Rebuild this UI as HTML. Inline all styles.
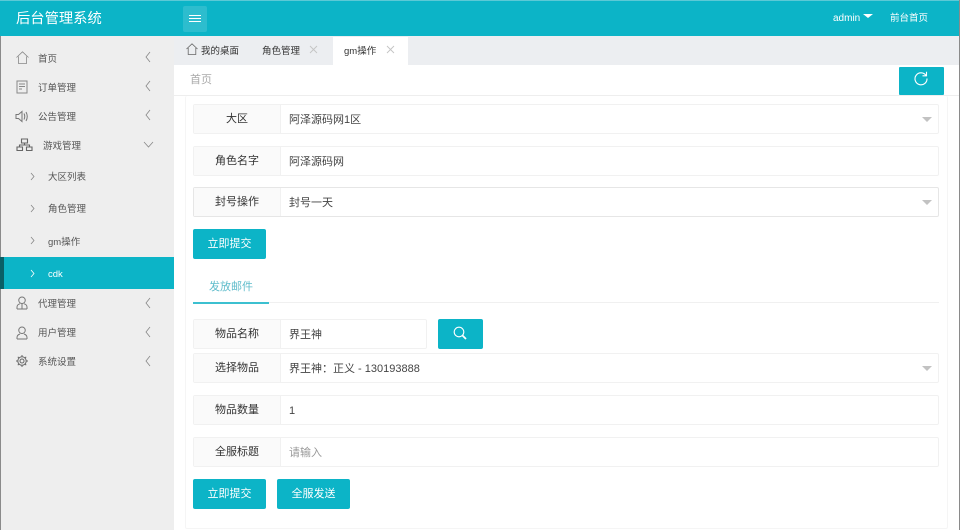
<!DOCTYPE html>
<html lang="zh">
<head>
<meta charset="utf-8">
<title>后台管理系统</title>
<style>
*{box-sizing:border-box;margin:0;padding:0}
html,body{width:960px;height:530px;overflow:hidden;background:#fff}
body{font-family:"Liberation Sans","Noto Sans CJK SC",sans-serif;position:relative;color:#333}
.a{position:absolute;white-space:nowrap}
svg{position:absolute;overflow:visible;fill:none}
.top{left:0;top:0;width:960px;height:36px;background:#0cb4c7;border-top:1px solid #5cc9d6}
.side{left:0;top:36px;width:174px;height:494px;background:#eeeeee}
.m{font-size:9.5px;color:#555;line-height:14px;margin-top:1px}
.tabs{left:174px;top:36px;width:786px;height:29px;background:#eceef1}
.t{font-size:9.5px;color:#333;line-height:14px;margin-top:1px}
.row{left:193px;width:746px;height:30px;border:1px solid #f1f1f1;background:#fff;border-radius:2px}
.lab{position:absolute;left:0;top:0;bottom:0;width:87px;background:#fafafa;border-right:1px solid #f1f1f1;text-align:center;font-size:11px;line-height:28px;color:#333}
.val{position:absolute;left:95px;top:0;font-size:11px;line-height:31px;color:#444;white-space:nowrap}
.arr{position:absolute;right:6px;top:12px;width:0;height:0;border:5px solid transparent;border-top:5px solid #c2c2c2;border-bottom:0}
.btn{height:30px;width:73px;background:#0cb4c7;color:#fff;font-size:11px;line-height:31px;text-align:center;border-radius:2px}
</style>
</head>
<body>
<div class="a top"></div>
<div class="a" style="left:16px;top:9px;font-size:14.3px;line-height:20px;color:#fff">后台管理系统</div>
<div class="a" style="left:183px;top:6px;width:24px;height:26px;background:#2dbdce;border-radius:2px"></div>
<svg style="left:183px;top:6px" width="24" height="26" stroke="#fff" stroke-width="1"><path d="M6 9.500H18M6 12.500H18M6 15.500H18"/></svg>
<div class="a" style="left:833px;top:12px;font-size:10px;line-height:14px;color:#fff">admin</div>
<div class="a" style="left:863px;top:14px;width:0;height:0;border:4px solid transparent;border-top:4px solid #fff;border-bottom:0;border-left-width:5px;border-right-width:5px"></div>
<div class="a" style="left:890px;top:12px;font-size:9.5px;line-height:14px;color:#fff">前台首页</div>

<div class="a side"></div>
<div class="a" style="left:0;top:36px;width:1px;height:494px;background:#8a8a8a"></div>

<svg style="left:16px;top:51px" width="13" height="13" stroke="#888" stroke-width="0.8"><path d="M0.500 6.500L6.500 .8L12.500 6.500M2.500 5.500V12.500H10.500V5.500"/></svg>
<div class="a m" style="left:38px;top:52px">首页</div>
<svg style="left:16px;top:80px" width="12" height="14" stroke="#888" stroke-width="1"><path d="M1 1H11V13H1ZM3 4H9M3 6.500H9M3 9H6"/></svg>
<div class="a m" style="left:38px;top:81px">订单管理</div>
<svg style="left:15px;top:110px" width="14" height="13" stroke="#777" stroke-width="1"><path d="M1 4.500H3.500L7 1.500V11.500L3.500 8.500H1ZM9 3.500Q10.500 6.500 9 9.500M11 2Q13.500 6.500 11 11"/></svg>
<div class="a m" style="left:38px;top:110px">公告管理</div>
<svg style="left:16px;top:138px" width="17" height="13" stroke="#666" stroke-width="1.100"><path d="M5.500 1H11.500V5H5.500ZM1 9H6.500V12.500H1ZM10.500 9H16V12.500H10.500ZM8.500 5V7H3.500V9M8.500 7H13.500V9"/></svg>
<div class="a m" style="left:43px;top:139px">游戏管理</div>
<div class="a m" style="left:48px;top:170px">大区列表</div>
<div class="a m" style="left:48px;top:202px">角色管理</div>
<div class="a m" style="left:48px;top:235px">gm操作</div>
<div class="a" style="left:0;top:257px;width:174px;height:32px;background:#0cb4c7"></div>
<div class="a" style="left:0;top:257px;width:4px;height:32px;background:#0a5f66"></div>
<div class="a m" style="left:48px;top:267px;color:#fff">cdk</div>
<svg style="left:16px;top:296px" width="12" height="14" stroke="#777" stroke-width="1"><path d="M6 1A3 3 0 0 1 6 7.500A3 3 0 0 1 6 1ZM1 13V11Q1 8.500 4 7.800M11 13V11Q11 8.500 8 7.800M1 13H11M6 8V13"/></svg>
<div class="a m" style="left:38px;top:297px">代理管理</div>
<svg style="left:16px;top:326px" width="12" height="14" stroke="#777" stroke-width="1"><path d="M6 1A3 3 0 0 1 6 7.500A3 3 0 0 1 6 1ZM1 13V11.500Q1 9 4 8M11 13V11.500Q11 9 8 8M1 13H11"/></svg>
<div class="a m" style="left:38px;top:326px">用户管理</div>
<svg style="left:16px;top:355px" width="12" height="12" stroke="#666" stroke-width="1"><circle cx="6" cy="6" r="2"/><circle cx="6" cy="6" r="4.200"/><path d="M6 0V1.800M6 10.200V12M0 6H1.800M10.200 6H12M1.800 1.800L3 3M9 9L10.200 10.200M10.200 1.800L9 3M3 9L1.800 10.200"/></svg>
<div class="a m" style="left:38px;top:355px">系统设置</div>

<svg style="left:0;top:0" width="174" height="370" stroke="#888" stroke-width="0.8">
<path d="M150 52L146 57L150 62M150 81L146 86L150 91M150 110L146 115L150 120M150 298L146 303L150 308M150 327L146 332L150 337M150 356L146 361L150 366"/>
<path d="M144 142L148.500 147L153 142"/>
<path d="M31 173L34 176.500L31 180M31 205L34 208.500L31 212M31 237L34 240.500L31 244"/>
<path d="M31 270L34 273.500L31 277" stroke="#fff"/>
</svg>

<div class="a tabs"></div>
<div class="a" style="left:333px;top:37px;width:75px;height:28px;background:#fff"></div>
<svg style="left:186px;top:43px" width="12" height="12" stroke="#666" stroke-width="0.8"><path d="M0.500 6L6 .8L11.500 6M2.200 5V11.500H9.800V5"/></svg>
<div class="a t" style="left:201px;top:44px">我的桌面</div>
<div class="a t" style="left:262px;top:44px">角色管理</div>
<div class="a t" style="left:344px;top:44px">gm操作</div>
<svg style="left:0;top:0" width="400" height="60" stroke="#c4c4c4" stroke-width="0.9"><path d="M310 46L317 53M317 46L310 53M387 46L394 53M394 46L387 53"/></svg>

<div class="a" style="left:174px;top:65px;width:786px;height:31px;background:#fff;border-bottom:1px solid #eeeeee"></div>
<div class="a" style="left:190px;top:72px;font-size:11px;line-height:17px;color:#aaa">首页</div>
<div class="a" style="left:899px;top:67px;width:45px;height:28px;background:#0cb4c7;border-radius:1px"></div>
<svg style="left:914px;top:71px" width="14" height="14" stroke="#fff" stroke-width="1.100"><path d="M12 4.500A6 6 0 1 0 13 7.500M12.500 .8V4.800H8.500"/></svg>

<div class="a" style="left:185px;top:96px;width:763px;height:433px;border:1px solid #f5f5f5;border-top:0;border-radius:2px"></div>

<div class="a row" style="top:104px"><div class="lab">大区</div><div class="val">阿泽源码网1区</div><div class="arr"></div></div>
<div class="a row" style="top:146px"><div class="lab">角色名字</div><div class="val">阿泽源码网</div></div>
<div class="a row" style="top:187px;border-color:#e6e6e6"><div class="lab">封号操作</div><div class="val">封号一天</div><div class="arr"></div></div>
<div class="a btn" style="left:193px;top:229px">立即提交</div>

<div class="a" style="left:193px;top:302px;width:746px;height:1px;background:#f0f0f0"></div>
<div class="a" style="left:193px;top:302px;width:76px;height:2px;background:#3cc0d0"></div>
<div class="a" style="left:209px;top:279px;font-size:11px;line-height:17px;color:#5fbccb">发放邮件</div>

<div class="a row" style="top:319px;width:234px"><div class="lab">物品名称</div><div class="val">界王神</div></div>
<div class="a btn" style="left:438px;top:319px;width:45px"></div>
<svg style="left:453px;top:326px" width="15" height="15" stroke="#fff" stroke-width="1.100"><circle cx="6" cy="6" r="4.800"/><path d="M9.500 9.500L13 13" stroke-width="1.800"/></svg>
<div class="a row" style="top:353px"><div class="lab">选择物品</div><div class="val">界王神：正义 - 130193888</div><div class="arr"></div></div>
<div class="a row" style="top:395px"><div class="lab">物品数量</div><div class="val">1</div></div>
<div class="a row" style="top:437px"><div class="lab">全服标题</div><div class="val" style="color:#999">请输入</div></div>
<div class="a btn" style="left:193px;top:479px">立即提交</div>
<div class="a btn" style="left:277px;top:479px">全服发送</div>
<div class="a" style="left:959px;top:0;width:1px;height:530px;background:#8a8a8a"></div>
</body>
</html>
